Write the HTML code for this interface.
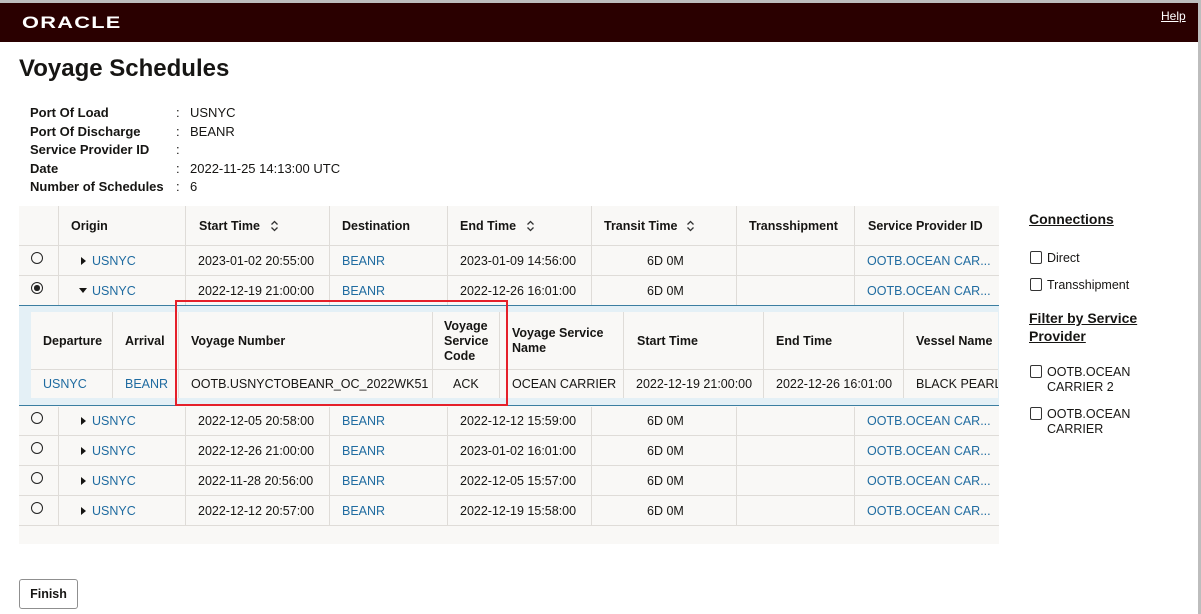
<!DOCTYPE html>
<html><head><meta charset="utf-8"><style>
*{margin:0;padding:0;box-sizing:border-box}
body{width:1201px;height:614px;overflow:hidden;background:#fff;font-family:"Liberation Sans",Arial,sans-serif;font-size:12.5px;color:#161513;position:relative}
.a{position:absolute;white-space:nowrap}
.b{font-weight:bold}
.lk{color:#1f6ba0}
.hl{position:absolute;height:1px;background:#dfdcd8}
.vl{position:absolute;width:1px;background:#dfdcd8}
.rad{position:absolute;width:12px;height:12px;border:1.4px solid #222;border-radius:50%}
.rad.on::after{content:"";position:absolute;left:2px;top:2px;width:5.5px;height:5.5px;border-radius:50%;background:#222}
.tri{position:absolute;width:0;height:0;border-top:4px solid transparent;border-bottom:4px solid transparent;border-left:5px solid #161513}
.trd{position:absolute;width:0;height:0;border-left:4px solid transparent;border-right:4px solid transparent;border-top:5px solid #161513}
.cb{position:absolute;width:12px;height:13px;border:1.4px solid #333;border-radius:2px}
.sort{position:absolute}
</style></head><body>
<div class="a" style="left:0;top:0;width:1201px;height:3px;background:#bdbdbd"></div>
<div class="a" style="left:1198px;top:0;width:3px;height:614px;background:#bdbdbd"></div>
<div class="a" style="left:0;top:3px;width:1198px;height:39px;background:#2a0000"></div>
<div class="a" style="left:22px;top:13px;color:#fff;font-size:17px;font-weight:bold;letter-spacing:1px;transform:scaleX(1.28);transform-origin:left">ORACLE</div>
<div class="a" style="left:1161px;top:9px;color:#fff;font-size:12px;text-decoration:underline">Help</div>
<div class="a b" style="left:19px;top:55px;font-size:24px">Voyage Schedules</div>

<div class="a b" style="left:30px;top:104px;font-size:13px;line-height:18.5px">Port Of Load<br>Port Of Discharge<br>Service Provider ID<br>Date<br>Number of Schedules</div>
<div class="a" style="left:176px;top:104px;font-size:13px;line-height:18.5px">:<br>:<br>:<br>:<br>:</div>
<div class="a" style="left:190px;top:104px;font-size:13px;line-height:18.5px">USNYC<br>BEANR<br><br>2022-11-25 14:13:00 UTC<br>6</div>

<div class="a" style="left:19px;top:206px;width:980px;height:338px;background:#f9f8f6"></div>
<div class="a" style="left:19px;top:305px;width:980px;height:101px;background:#e4f0f6;border-top:1px solid #3b7ea1;border-bottom:1px solid #3b7ea1"></div>
<div class="a" style="left:31px;top:312px;width:967px;height:86px;background:#f9f8f6"></div>

<div class="vl" style="left:58px;top:206px;height:99px"></div><div class="vl" style="left:58px;top:407px;height:118px"></div>
<div class="vl" style="left:185px;top:206px;height:99px"></div><div class="vl" style="left:185px;top:407px;height:118px"></div>
<div class="vl" style="left:329px;top:206px;height:99px"></div><div class="vl" style="left:329px;top:407px;height:118px"></div>
<div class="vl" style="left:447px;top:206px;height:99px"></div><div class="vl" style="left:447px;top:407px;height:118px"></div>
<div class="vl" style="left:591px;top:206px;height:99px"></div><div class="vl" style="left:591px;top:407px;height:118px"></div>
<div class="vl" style="left:736px;top:206px;height:99px"></div><div class="vl" style="left:736px;top:407px;height:118px"></div>
<div class="vl" style="left:854px;top:206px;height:99px"></div><div class="vl" style="left:854px;top:407px;height:118px"></div>
<div class="hl" style="left:19px;top:245px;width:980px"></div>
<div class="hl" style="left:19px;top:275px;width:980px"></div>
<div class="hl" style="left:19px;top:435px;width:980px"></div>
<div class="hl" style="left:19px;top:465px;width:980px"></div>
<div class="hl" style="left:19px;top:495px;width:980px"></div>
<div class="hl" style="left:19px;top:525px;width:980px"></div>

<div class="a b" style="left:71px;top:219px">Origin</div>
<div class="a b" style="left:199px;top:219px">Start Time</div>
<svg class="sort" style="left:270px;top:220px" width="9" height="12"><path d="M1.5 4.5L4.5 1.5L7.5 4.5M1.5 7.5L4.5 10.5L7.5 7.5" fill="none" stroke="#333" stroke-width="1.3"/></svg>
<div class="a b" style="left:342px;top:219px">Destination</div>
<div class="a b" style="left:460px;top:219px">End Time</div>
<svg class="sort" style="left:526px;top:220px" width="9" height="12"><path d="M1.5 4.5L4.5 1.5L7.5 4.5M1.5 7.5L4.5 10.5L7.5 7.5" fill="none" stroke="#333" stroke-width="1.3"/></svg>
<div class="a b" style="left:604px;top:219px">Transit Time</div>
<svg class="sort" style="left:686px;top:220px" width="9" height="12"><path d="M1.5 4.5L4.5 1.5L7.5 4.5M1.5 7.5L4.5 10.5L7.5 7.5" fill="none" stroke="#333" stroke-width="1.3"/></svg>
<div class="a b" style="left:749px;top:219px">Transshipment</div>
<div class="a b" style="left:868px;top:219px">Service Provider ID</div>

<div class="rad" style="left:31px;top:252px"></div><div class="tri" style="left:81px;top:257px"></div>
<div class="a lk" style="left:92px;top:254px">USNYC</div><div class="a" style="left:198px;top:254px">2023-01-02 20:55:00</div><div class="a lk" style="left:342px;top:254px">BEANR</div><div class="a" style="left:460px;top:254px">2023-01-09 14:56:00</div><div class="a" style="left:647px;top:254px">6D 0M</div><div class="a lk" style="left:867px;top:254px">OOTB.OCEAN CAR...</div>
<div class="rad on" style="left:31px;top:282px"></div><div class="trd" style="left:79px;top:288px"></div>
<div class="a lk" style="left:92px;top:284px">USNYC</div><div class="a" style="left:198px;top:284px">2022-12-19 21:00:00</div><div class="a lk" style="left:342px;top:284px">BEANR</div><div class="a" style="left:460px;top:284px">2022-12-26 16:01:00</div><div class="a" style="left:647px;top:284px">6D 0M</div><div class="a lk" style="left:867px;top:284px">OOTB.OCEAN CAR...</div>

<div class="rad" style="left:31px;top:412px"></div><div class="tri" style="left:81px;top:417px"></div>
<div class="a lk" style="left:92px;top:414px">USNYC</div><div class="a" style="left:198px;top:414px">2022-12-05 20:58:00</div><div class="a lk" style="left:342px;top:414px">BEANR</div><div class="a" style="left:460px;top:414px">2022-12-12 15:59:00</div><div class="a" style="left:647px;top:414px">6D 0M</div><div class="a lk" style="left:867px;top:414px">OOTB.OCEAN CAR...</div>
<div class="rad" style="left:31px;top:442px"></div><div class="tri" style="left:81px;top:447px"></div>
<div class="a lk" style="left:92px;top:444px">USNYC</div><div class="a" style="left:198px;top:444px">2022-12-26 21:00:00</div><div class="a lk" style="left:342px;top:444px">BEANR</div><div class="a" style="left:460px;top:444px">2023-01-02 16:01:00</div><div class="a" style="left:647px;top:444px">6D 0M</div><div class="a lk" style="left:867px;top:444px">OOTB.OCEAN CAR...</div>
<div class="rad" style="left:31px;top:472px"></div><div class="tri" style="left:81px;top:477px"></div>
<div class="a lk" style="left:92px;top:474px">USNYC</div><div class="a" style="left:198px;top:474px">2022-11-28 20:56:00</div><div class="a lk" style="left:342px;top:474px">BEANR</div><div class="a" style="left:460px;top:474px">2022-12-05 15:57:00</div><div class="a" style="left:647px;top:474px">6D 0M</div><div class="a lk" style="left:867px;top:474px">OOTB.OCEAN CAR...</div>
<div class="rad" style="left:31px;top:502px"></div><div class="tri" style="left:81px;top:507px"></div>
<div class="a lk" style="left:92px;top:504px">USNYC</div><div class="a" style="left:198px;top:504px">2022-12-12 20:57:00</div><div class="a lk" style="left:342px;top:504px">BEANR</div><div class="a" style="left:460px;top:504px">2022-12-19 15:58:00</div><div class="a" style="left:647px;top:504px">6D 0M</div><div class="a lk" style="left:867px;top:504px">OOTB.OCEAN CAR...</div>

<div class="vl" style="left:112px;top:312px;height:86px"></div>
<div class="vl" style="left:178px;top:312px;height:86px"></div>
<div class="vl" style="left:432px;top:312px;height:86px"></div>
<div class="vl" style="left:499px;top:312px;height:86px"></div>
<div class="vl" style="left:623px;top:312px;height:86px"></div>
<div class="vl" style="left:763px;top:312px;height:86px"></div>
<div class="vl" style="left:903px;top:312px;height:86px"></div>
<div class="hl" style="left:31px;top:369px;width:967px"></div>
<div class="a b" style="left:43px;top:334px">Departure</div>
<div class="a b" style="left:125px;top:334px">Arrival</div>
<div class="a b" style="left:191px;top:334px">Voyage Number</div>
<div class="a b" style="left:444px;top:319px;line-height:15px">Voyage<br>Service<br>Code</div>
<div class="a b" style="left:512px;top:326px;line-height:15px">Voyage Service<br>Name</div>
<div class="a b" style="left:637px;top:334px">Start Time</div>
<div class="a b" style="left:776px;top:334px">End Time</div>
<div class="a b" style="left:916px;top:334px">Vessel Name</div>
<div class="a lk" style="left:43px;top:377px">USNYC</div>
<div class="a lk" style="left:125px;top:377px">BEANR</div>
<div class="a" style="left:191px;top:377px">OOTB.USNYCTOBEANR_OC_2022WK51</div>
<div class="a" style="left:453px;top:377px">ACK</div>
<div class="a" style="left:512px;top:377px">OCEAN CARRIER</div>
<div class="a" style="left:636px;top:377px">2022-12-19 21:00:00</div>
<div class="a" style="left:776px;top:377px">2022-12-26 16:01:00</div>
<div class="a" style="left:916px;top:377px;width:82px;overflow:hidden">BLACK PEARL</div>
<div class="a" style="left:175px;top:300px;width:333px;height:106px;border:2px solid #e5202a"></div>

<div class="a b" style="left:1029px;top:211px;font-size:14px;text-decoration:underline">Connections</div>
<div class="cb" style="left:1030px;top:251px"></div><div class="a" style="left:1047px;top:251px">Direct</div>
<div class="cb" style="left:1030px;top:278px"></div><div class="a" style="left:1047px;top:278px">Transshipment</div>
<div class="a b" style="left:1029px;top:309px;font-size:14px;line-height:18px;text-decoration:underline">Filter by Service<br>Provider</div>
<div class="cb" style="left:1030px;top:365px"></div><div class="a" style="left:1047px;top:365px;line-height:15px">OOTB.OCEAN<br>CARRIER 2</div>
<div class="cb" style="left:1030px;top:407px"></div><div class="a" style="left:1047px;top:407px;line-height:15px">OOTB.OCEAN<br>CARRIER</div>

<div class="a b" style="left:19px;top:579px;width:59px;height:30px;border:1px solid #8f8f8f;border-radius:3px;background:#fff;text-align:center;line-height:28px">Finish</div>
</body></html>
